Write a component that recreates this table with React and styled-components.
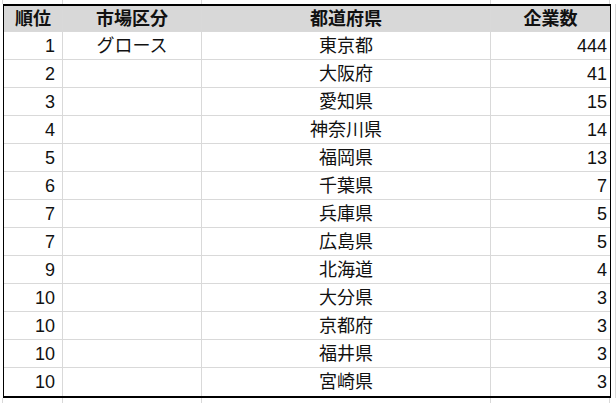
import React from 'react'
import styled, { createGlobalStyle } from 'styled-components'

const GlobalStyle = createGlobalStyle`
    html, body {
        margin: 0;
        padding: 0;
        background: #fff;
    }
    body {
        font-family: "Liberation Sans", "Noto Sans CJK JP", sans-serif;
        color: #111;
    }
`;

const COLUMNS = '3px 60px 139px 289px 119px 1fr';
const GRID = '#d9d9d9';

const rows = [
    { rank: 1, market: 'グロース', pref: '東京都', count: 444 },
    { rank: 2, market: '', pref: '大阪府', count: 41 },
    { rank: 3, market: '', pref: '愛知県', count: 15 },
    { rank: 4, market: '', pref: '神奈川県', count: 14 },
    { rank: 5, market: '', pref: '福岡県', count: 13 },
    { rank: 6, market: '', pref: '千葉県', count: 7 },
    { rank: 7, market: '', pref: '兵庫県', count: 5 },
    { rank: 7, market: '', pref: '広島県', count: 5 },
    { rank: 9, market: '', pref: '北海道', count: 4 },
    { rank: 10, market: '', pref: '大分県', count: 3 },
    { rank: 10, market: '', pref: '京都府', count: 3 },
    { rank: 10, market: '', pref: '福井県', count: 3 },
    { rank: 10, market: '', pref: '宮崎県', count: 3 },
];

const Sheet = styled.div`
    width: 616px;
    height: 403px;
    overflow: hidden;
    display: flex;
    flex-direction: column;
`;

const EdgeRow = styled.div`
    display: grid;
    grid-template-columns: ${COLUMNS};
    height: ${(p) => p.$h}px;
    flex: ${(p) => (p.$grow ? 1 : 'none')};
`;

const EdgeCell = styled.div`
    border-right: 1px solid ${GRID};
`;

const Middle = styled.div`
    display: grid;
    grid-template-columns: 3px 608px 1fr;
`;

const Gutter = styled.div`
    border-right: ${(p) => (p.$line ? `1px solid ${GRID}` : 'none')};
    margin-left: ${(p) => (p.$line ? '1px' : 0)};
`;

const Table = styled.div`
    border: 1px solid #000;
    border-top-width: 2px;
    border-bottom-width: 2px;
    display: flex;
    flex-direction: column;
`;

const Row = styled.div`
    display: grid;
    grid-template-columns: 59px 139px 289px 119px;
    height: ${(p) => (p.$head ? 26 : 28)}px;
    background: ${(p) => (p.$head ? '#d8d8d8' : '#fff')};
    border-bottom: ${(p) => (p.$last ? 'none' : `1px solid ${GRID}`)};
    box-sizing: border-box;
    font-size: 18px;
    font-weight: ${(p) => (p.$head ? 700 : 400)};
`;

const Cell = styled.div`
    display: flex;
    align-items: center;
    justify-content: ${(p) => (p.$align === 'right' ? 'flex-end' : 'center')};
    padding-right: ${(p) => p.$pr || 0}px;
    border-right: ${(p) => (p.$end ? 'none' : `1px solid ${GRID}`)};
    white-space: nowrap;
    line-height: 1;
`;

export default function App() {
    return (
        <>
            <GlobalStyle />
            <Sheet>
                <EdgeRow $h={4}>
                    <EdgeCell /><EdgeCell /><EdgeCell /><EdgeCell /><EdgeCell /><div />
                </EdgeRow>
                <Middle>
                    <div />
                    <Table>
                        <Row $head>
                            <Cell>順位</Cell>
                            <Cell>市場区分</Cell>
                            <Cell>都道府県</Cell>
                            <Cell $end>企業数</Cell>
                        </Row>
                        {rows.map((r, i) => (
                            <Row key={i} $last={i === rows.length - 1}>
                                <Cell $align="right" $pr={7}>{r.rank}</Cell>
                                <Cell>{r.market}</Cell>
                                <Cell>{r.pref}</Cell>
                                <Cell $align="right" $pr={3} $end>{r.count}</Cell>
                            </Row>
                        ))}
                    </Table>
                    <Gutter $line />
                </Middle>
                <EdgeRow $grow>
                    <EdgeCell /><EdgeCell /><EdgeCell /><EdgeCell /><EdgeCell /><div />
                </EdgeRow>
            </Sheet>
        </>
    )
}
